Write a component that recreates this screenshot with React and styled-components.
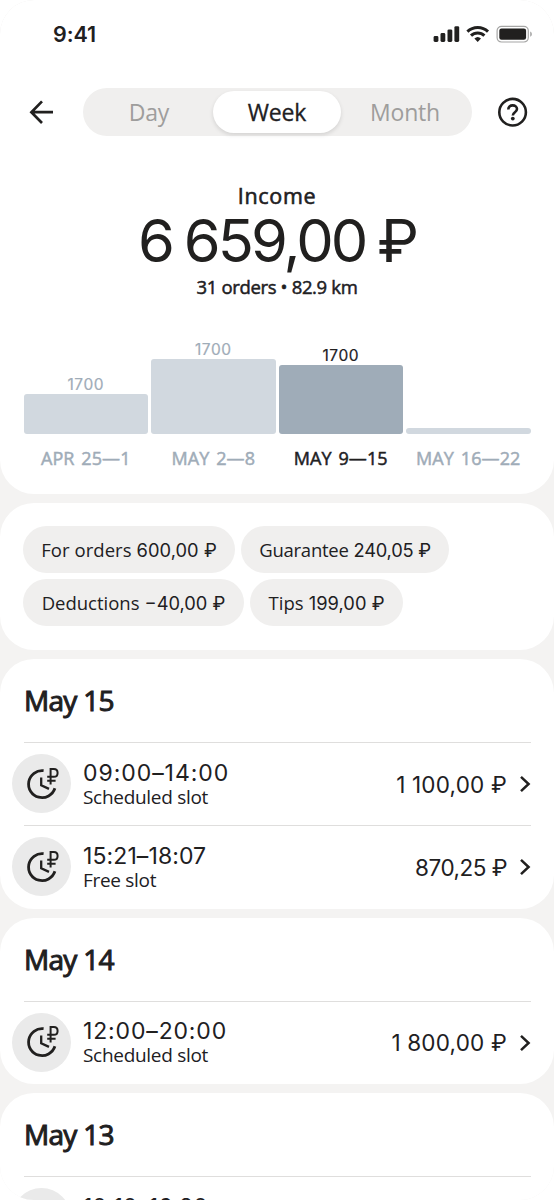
import React from 'react';
import styled, { createGlobalStyle } from 'styled-components';

const bars = [
  { label: 'APR 25—1', value: '1700', height: 40 },
  { label: 'MAY 2—8', value: '1700', height: 75 },
  { label: 'MAY 9—15', value: '1700', height: 69, active: true },
  { label: 'MAY 16—22', value: '', height: 6 },
];

const chips = [
  { text: 'For orders', sum: '600,00 ₽', width: 212, track: 0.05 },
  { text: 'Guarantee', sum: '240,05 ₽', width: 208, track: -0.25 },
  { text: 'Deductions', sum: '−40,00 ₽', width: 221, track: 0 },
  { text: 'Tips', sum: '199,00 ₽', width: 153, track: 0.05 },
];

const days = [
  {
    title: 'May 15',
    slots: [
      { time: '09:00–14:00', timeTrack: 0.95, type: 'Scheduled slot', sum: '1 100,00 ₽', sumTrack: 0.2 },
      { time: '15:21–18:07', timeTrack: 0.1, type: 'Free slot', sum: '870,25 ₽', sumTrack: -0.5 },
    ],
  },
  {
    title: 'May 14',
    slots: [
      { time: '12:00–20:00', timeTrack: 0.85, type: 'Scheduled slot', sum: '1 800,00 ₽', sumTrack: 0.2 },
    ],
  },
  {
    title: 'May 13',
    slots: [{ time: '10:10–16:20', timeTrack: 0 }],
  },
];

const StatusIcons = () => (
  <svg width='100' height='18' viewBox='0 0 100 18' fill='#21201f'>
    <rect x='0.6' y='11' width='4.8' height='6' rx='1.4' />
    <rect x='7.5' y='8' width='4.8' height='9' rx='1.4' />
    <rect x='14.5' y='4.4' width='4.8' height='12.6' rx='1.4' />
    <rect x='21.4' y='1.2' width='4.8' height='15.8' rx='1.4' />
    <g fill='none' stroke='#21201f' strokeWidth='3'>
      <path d='M34.4 6.6a15 15 0 0 1 20.6 0' />
      <path d='M38 10.6a9.6 9.6 0 0 1 13.4 0' />
    </g>
    <path d='M44.7 16.9l-3.3-3.4a4.9 4.9 0 0 1 6.6 0z' />
    <rect x='64.1' y='1.4' width='31.2' height='15.6' rx='4.4' fill='none' stroke='#a6a6a5' strokeWidth='1.2' />
    <rect x='66.3' y='3.6' width='26.8' height='11.2' rx='2.2' />
    <path d='M97.2 6.6c2.2.9 2.2 4.4 0 5.2z' fill='#a6a6a5' />
  </svg>
);

const BackIcon = () => (
  <svg width='24' height='24' viewBox='0 0 24 24' fill='none' stroke='#21201f' strokeWidth='2.7'>
    <path d='M24 12.2H2.6M13 1.4L2.4 12.2 13 23' />
  </svg>
);

const HelpIcon = () => (
  <svg width='30' height='30' viewBox='0 0 30 30' fill='none' stroke='#21201f' strokeWidth='2.6'>
    <circle cx='14.6' cy='15.2' r='13.3' />
    <path d='M10.3 12.6c0-2.6 1.8-4.2 4.4-4.2 2.5 0 4.3 1.5 4.3 3.7 0 3.3-4.2 3-4.2 6.4' />
    <circle cx='14.8' cy='21.6' r='1.9' fill='#21201f' stroke='none' />
  </svg>
);

const SlotIcon = () => (
  <svg width='34' height='34' viewBox='0 0 34 34' fill='none' stroke='#21201f'>
    <path d='M18.6 3.7A13.5 13.5 0 1 0 29.9 21.3' strokeWidth='2.8' />
    <path d='M16.2 10.4v7.8l7.8 3.7' strokeWidth='2.3' />
    <path d='M25.6 17.4V2h3.2c2.3 0 3.8 1.6 3.8 3.9s-1.5 3.9-3.8 3.9h-6.6M22.2 13.7h8.4' strokeWidth='2' />
  </svg>
);

const ChevronIcon = () => (
  <svg width='12' height='18' viewBox='0 0 12 18' fill='none' stroke='#21201f' strokeWidth='2.5'>
    <path d='M2 1.8L9.6 9 2 16.2' />
  </svg>
);

const App = () => (
  <>
    <GlobalStyle />
    <Screen>
      <IncomeCard>
        <StatusBar>
          <Clock>9:41</Clock>
          <StatusIcons />
        </StatusBar>
        <Header>
          <IconButton aria-label='Back'>
            <BackIcon />
          </IconButton>
          <Tabs>
            <Tab>Day</Tab>
            <Tab $active>Week</Tab>
            <Tab>Month</Tab>
          </Tabs>
          <IconButton aria-label='Help'>
            <HelpIcon />
          </IconButton>
        </Header>
        <Summary>
          <SummaryTitle>Income</SummaryTitle>
          <SummaryTotal>6 659,00 ₽</SummaryTotal>
          <SummaryNote>31 orders • 82.9 km</SummaryNote>
        </Summary>
        <Chart>
          {bars.map((bar) => (
            <Column key={bar.label}>
              <BarValue $active={bar.active}>{bar.value}</BarValue>
              <Bar $active={bar.active} style={{ height: bar.height }} />
              <BarLabel $active={bar.active}>{bar.label}</BarLabel>
            </Column>
          ))}
        </Chart>
      </IncomeCard>
      <ChipsCard>
        {chips.map((chip) => (
          <Chip key={chip.text} $width={chip.width} $track={chip.track}>
            {chip.text}
            <ChipSum>{chip.sum}</ChipSum>
          </Chip>
        ))}
      </ChipsCard>
      {days.map((day) => (
        <DayCard key={day.title}>
          <DayTitle>{day.title}</DayTitle>
          {day.slots.map((slot) => (
            <Slot key={slot.time}>
              <SlotBadge>
                <SlotIcon />
              </SlotBadge>
              <SlotBody>
                <SlotText>
                  <SlotTime $track={slot.timeTrack}>{slot.time}</SlotTime>
                  <SlotType>{slot.type}</SlotType>
                </SlotText>
                <SlotSum $track={slot.sumTrack}>{slot.sum}</SlotSum>
                <ChevronIcon />
              </SlotBody>
            </Slot>
          ))}
        </DayCard>
      ))}
    </Screen>
  </>
);

export default App;

const GlobalStyle = createGlobalStyle`
  * {
    box-sizing: border-box;
  }

  body {
    margin: 0;
    background: #fff;
    color: #21201f;
    font-family: 'Open Sans', 'Noto Sans', sans-serif;
    overflow: hidden;
  }
`;

const Screen = styled.div`
  display: flex;
  flex-direction: column;
  gap: 9px;
  width: 554px;
  height: 1200px;
  overflow: hidden;
  border-radius: 34px;
  background: #f4f3f2;
`;

const Card = styled.section`
  flex-shrink: 0;
  border-radius: 34px;
  background: #fff;
  overflow: hidden;
`;

const IncomeCard = styled(Card)`
  height: 494px;
`;

const DayCard = styled(Card)`
  padding-bottom: 0.5px;
`;

const StatusBar = styled.div`
  display: flex;
  justify-content: space-between;
  align-items: center;
  height: 68px;
  padding: 0 21px 0 53px;
`;

const Clock = styled.span`
  font-family: Inter, sans-serif;
  font-size: 21.5px;
  font-weight: 600;
  letter-spacing: -0.1px;
`;

const Header = styled.header`
  display: flex;
  align-items: center;
  justify-content: space-between;
  height: 48px;
  margin-top: 20px;
  padding: 0 26px 0 29px;
`;

const IconButton = styled.button`
  display: flex;
  padding: 0;
  border: 0;
  background: none;
`;

const Tabs = styled.div`
  display: grid;
  grid-template-columns: repeat(3, 128px);
  justify-content: center;
  width: 389px;
  height: 48px;
  margin-left: 3px;
  padding: 3px 0;
  border-radius: 24px;
  background: #f0efee;
`;

const Tab = styled.div`
  display: flex;
  align-items: center;
  justify-content: center;
  border-radius: 21px;
  font-size: 23px;
  letter-spacing: -0.2px;
  color: ${({ $active }) => ($active ? '#21201f' : '#9e9d9c')};
  background: ${({ $active }) => ($active ? '#fff' : 'transparent')};
  box-shadow: ${({ $active }) => ($active ? '0 2px 4px rgba(0, 0, 0, 0.12)' : 'none')};
  -webkit-text-stroke: ${({ $active }) => ($active ? '0.3px' : '0')};
`;

const Summary = styled.div`
  display: flex;
  flex-direction: column;
  align-items: center;
  margin-top: 45px;
  white-space: nowrap;
`;

const SummaryTitle = styled.div`
  font-size: 21.5px;
  line-height: 30px;
  letter-spacing: 0.7px;
  -webkit-text-stroke: 0.6px;
`;

const SummaryTotal = styled.div`
  font-family: Inter, sans-serif;
  font-size: 59.5px;
  line-height: 58px;
  letter-spacing: -2.9px;
  word-spacing: -2px;
`;

const SummaryNote = styled.div`
  margin-top: 5px;
  font-size: 18.5px;
  line-height: 26px;
  letter-spacing: -0.35px;
  -webkit-text-stroke: 0.5px;
`;

const Chart = styled.div`
  display: flex;
  align-items: flex-end;
  gap: 3px;
  height: 144px;
  margin-top: 27px;
  padding: 0 23.5px;
`;

const Column = styled.div`
  display: flex;
  flex: 1;
  flex-direction: column;
  align-items: center;
`;

const BarValue = styled.div`
  font-family: Inter, sans-serif;
  font-size: 15.5px;
  line-height: 19px;
  letter-spacing: 0.5px;
  color: ${({ $active }) => ($active ? '#21201f' : '#9facb8')};
  -webkit-text-stroke: 0.2px;
`;

const Bar = styled.div`
  width: 100%;
  border-radius: 3px;
  background: ${({ $active }) => ($active ? '#9facb8' : '#d1d8df')};
`;

const BarLabel = styled.div`
  margin-top: 11px;
  height: 26px;
  font-size: 18px;
  line-height: 26px;
  letter-spacing: 0.1px;
  word-spacing: 2px;
  white-space: nowrap;
  color: ${({ $active }) => ($active ? '#21201f' : '#9facb8')};
  -webkit-text-stroke: 0.5px;
`;

const ChipsCard = styled(Card)`
  display: flex;
  flex-wrap: wrap;
  align-content: flex-start;
  gap: 6px;
  height: 147px;
  padding: 23px 60px 0 23px;
`;

const Chip = styled.div`
  display: flex;
  align-items: center;
  justify-content: center;
  gap: 5px;
  width: ${({ $width }) => $width}px;
  height: 47px;
  border-radius: 24px;
  background: #f0efee;
  font-size: 18.5px;
  letter-spacing: ${({ $track }) => $track}px;
  white-space: nowrap;
`;

const ChipSum = styled.span`
  font-family: Inter, sans-serif;
  font-size: 18.3px;
`;

const DayTitle = styled.h2`
  height: 83px;
  margin: 0 23px 0 24px;
  font-size: 28px;
  font-weight: 400;
  line-height: 82px;
  letter-spacing: -0.7px;
  -webkit-text-stroke: 1px;
`;

const Slot = styled.div`
  display: flex;
  height: 83px;
  padding: 0 23px 0 12px;
`;

const SlotBadge = styled.div`
  display: flex;
  align-items: center;
  justify-content: center;
  width: 59px;
  height: 59px;
  margin-top: 12px;
  border-radius: 50%;
  background: #eaeaea;
`;

const SlotBody = styled.div`
  display: flex;
  flex: 1;
  align-items: center;
  margin-left: -47px;
  padding-left: 59px;
  border-top: 1px solid #dfdedd;
`;

const SlotText = styled.div`
  flex: 1;
`;

const SlotTime = styled.div`
  font-family: Inter, sans-serif;
  font-size: 23px;
  line-height: 26px;
  letter-spacing: ${({ $track }) => $track}px;
`;

const SlotType = styled.div`
  min-height: 23px;
  font-size: 19px;
  line-height: 23px;
  letter-spacing: -0.3px;
`;

const SlotSum = styled.div`
  margin-right: 12px;
  font-family: Inter, sans-serif;
  font-size: 22.5px;
  letter-spacing: ${({ $track }) => $track}px;
`;
